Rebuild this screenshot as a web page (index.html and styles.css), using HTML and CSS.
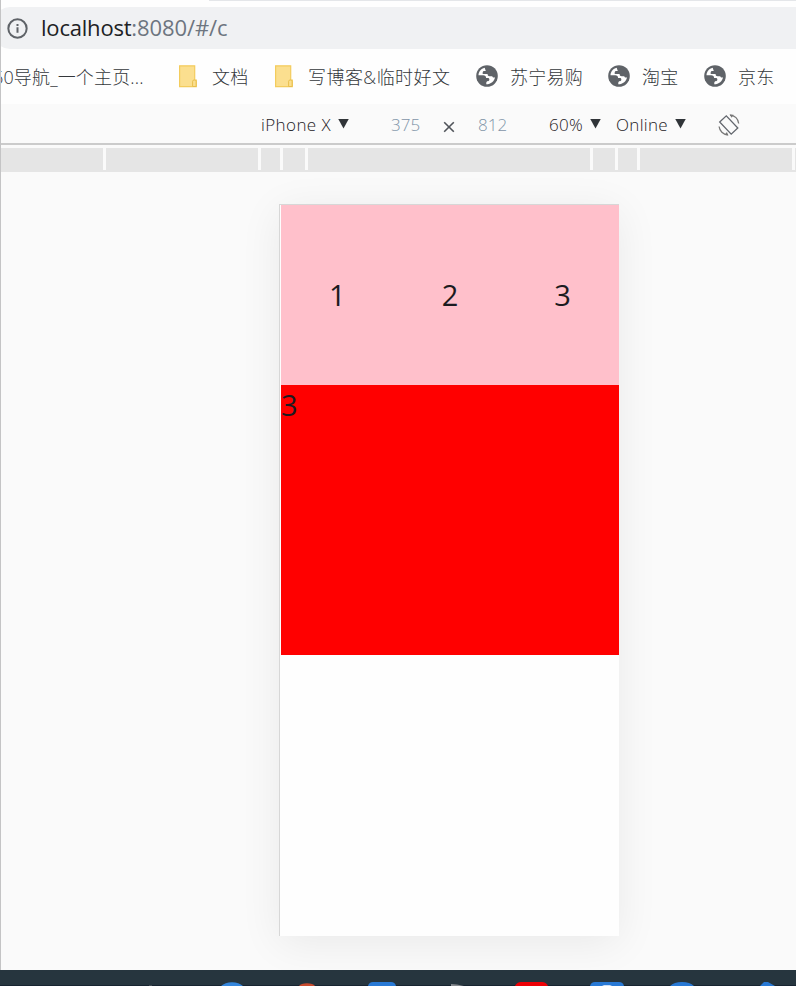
FILE: index.html
```html
<!DOCTYPE html>
<html lang="zh-CN">
<head>
<meta charset="utf-8">
<title>localhost:8080/#/c</title>
<link rel="stylesheet" href="styles.css">
</head>
<body>
<svg class="defs" width="0" height="0" aria-hidden="true">
  <symbol id="globe" viewBox="0 0 22 22">
    <circle cx="11" cy="11" r="10.8" fill="#5f6368"/>
    <path fill="#fff" d="M8.7 2.8C5 3.7 2.7 6.7 2.5 10.2h4.8c1.7 0 2.8 1.1 2.8 2.7h2c1.4 0 1.8 2.3.5 3-.8.4-1.9.2-2.2 1.2l-.2 2.2c4.8 0 8.2-3.3 8.8-7.1-1.2.7-2.4.2-2.8-.9h-2.5c-1.4 0-2.1-.7-2.1-2.2H6.7V7.6c0-1 .6-1.7 1.5-1.7h1.6c-.5-1.3-.8-2.1-1.1-3.1z"/>
  </symbol>
  <symbol id="folder" viewBox="0 0 20 23">
    <path d="M1.6.8h15.1v14.3h1.6v6.6H1.6z" fill="#fbdf8f" stroke="#f3cc5d" stroke-width="1.2"/>
    <path d="M14.6 21.5v-5.3q0-1.2 1.7-1.2t1.8 1.2v5.3z" fill="#fbdf8f" stroke="#e8bf4e"/>
  </symbol>
</svg>
<div class="window">
  <header class="address-row">
    <div class="address">
      <svg class="info" viewBox="0 0 22 22"><circle cx="11" cy="11" r="9.6" fill="none" stroke="#5f6368" stroke-width="2.1"/><path d="M11 9.8v5.7M11 6.2v2.1" stroke="#5f6368" stroke-width="2.1"/></svg>
      <div class="url"><span class="host">localhost</span><span class="path">:8080/#/c</span></div>
    </div>
  </header>
  <nav class="bookmarks">
    <span class="mark first">60导航_一个主页...</span>
    <svg class="folder"><use href="#folder"/></svg><span class="mark">文档</span>
    <svg class="folder"><use href="#folder"/></svg><span class="mark">写博客&amp;临时好文</span>
    <svg class="globe"><use href="#globe"/></svg><span class="mark">苏宁易购</span>
    <svg class="globe"><use href="#globe"/></svg><span class="mark">淘宝</span>
    <svg class="globe"><use href="#globe"/></svg><span class="mark">京东</span>
  </nav>
  <div class="device-bar">
    <span class="device">iPhone X</span><i class="arrow"></i>
    <span class="size">375</span>
    <svg class="times" viewBox="0 0 12 12"><path d="M1.2 1.2l9.6 9.6M10.8 1.2l-9.6 9.6" stroke="#50545a" stroke-width="1.6"/></svg>
    <span class="size">812</span>
    <span class="zoom">60%</span><i class="arrow"></i>
    <span class="online">Online</span><i class="arrow"></i>
    <svg class="rotate" viewBox="0 0 22 22" fill="none"><path d="M1.7 8L8.3 1.8 19.8 14 13.2 20.2z" stroke="#62666d" stroke-width="1.3"/><path d="M12 1.1c4.8.2 8.3 3.7 8.7 8.4M1.1 12.5c.5 4.5 4 8 8.7 8.4" stroke="#777" stroke-width="1.3"/><path d="M11.5.5l4 .2-1.8 3zM10.5 21.5l-4-.4 2.4-3z" fill="#777"/></svg>
  </div>
  <div class="ruler"><i></i><i></i><i></i><i></i><i></i><i></i><i></i><i></i><i></i></div>
  <main class="stage">
    <section class="phone">
      <div class="tabs"><span>1</span><span>2</span><span>3</span></div>
      <div class="content">3</div>
    </section>
  </main>
</div>
<footer class="taskbar">
  <svg viewBox="0 0 796 16">
    <path d="M0 15.5h796" stroke="#172431"/>
    <path d="M149 15.7h3" stroke="#75797b" stroke-width=".6"/>
    <path d="M221 16q4-3.8 11-3.8T243 16z" fill="#3486dc"/>
    <path d="M299 16q2-2.8 8-2.8t8 2.8z" fill="#c94b2e"/>
    <path d="M368 16q1-4 5-4h18q4 0 5 4z" fill="#2879d5"/>
    <path d="M451 14l6 .6 7 1.4h-13z" fill="#85898e"/>
    <path d="M515 16q2-4 6-4h21q4 0 6 4z" fill="#ed0005"/>
    <path d="M590 16q1-4 5-4h24q4 0 5 4z" fill="#2879d5"/>
    <path d="M602 16l2-1h6l2 1z" fill="#c9ddf5"/>
    <path d="M670 16q4-4 12-4t12 4z" fill="#2879d5"/>
    <path d="M760 16l4-4h4l7 4z" fill="#2879d5"/>
  </svg>
</footer>
</body>
</html>
```
FILE: styles.css
```css
* { box-sizing: border-box; }
body {
  margin: 0;
  width: 796px;
  height: 986px;
  overflow: hidden;
  background: #fefefe;
  font-family: "Open Sans", "Noto Sans", "Noto Sans CJK SC", sans-serif;
}
.defs { display: block; height: 0; }
.window { height: 970px; border-left: 1px solid #c4c4c5; overflow: hidden; }

.address-row {
  height: 50px;
  padding-top: 7px;
  background: linear-gradient(#e4e6e9, #e4e6e9) 208px 0 / 588px 1px no-repeat;
}
.address {
  display: flex;
  align-items: center;
  height: 42px;
  margin-left: -7px;
  padding-left: 13px;
  border-radius: 16px 0 0 16px;
  background: #f0f1f3;
}
.info { width: 21px; height: 21px; flex: none; }
.url { margin-left: 13px; font-size: 22px; line-height: 40px; height: 42px; white-space: nowrap; }
.host { color: #202124; letter-spacing: -0.2px; }
.path { color: #6d7580; letter-spacing: -0.1px; }

.bookmarks {
  display: grid;
  grid-template-columns: 177px 34px 62px 34px 168px 34px 98px 34px 62px 34px 60px;
  align-items: center;
  height: 54px;
  color: #34373b;
}
.mark { font-size: 18px; font-weight: 300; line-height: 54px; letter-spacing: 0.25px; white-space: nowrap; }
.mark:nth-of-type(3) { letter-spacing: 0.45px; }
.first { margin-left: -8px; letter-spacing: 0.15px; }
.folder { width: 20px; height: 23px; margin-top: -2px; }
.globe { width: 22px; height: 22px; margin-top: -3px; }

.device-bar {
  display: grid;
  grid-template-columns: 77px 53px 52px 35px 71px 41px 26px 59px 43px 22px;
  align-items: center;
  height: 41px;
  padding-left: 260px;
  background: #fafafa;
  color: #1c2024;
  font-size: 17px;
  font-weight: 300;
  line-height: 41px;
  white-space: nowrap;
}
.device { letter-spacing: 0.4px; }
.online { letter-spacing: 0.3px; }
.zoom { letter-spacing: 0.3px; }
.size { color: #7f94a8; }
.arrow {
  width: 11px;
  height: 10px;
  margin-top: -2px;
  background: #303438;
  clip-path: polygon(0 0, 100% 0, 50% 100%);
}
.times { width: 12px; height: 12px; margin-top: 5px; }
.rotate { width: 22px; height: 22px; }

.ruler {
  display: grid;
  grid-template-columns: 102px 152px 19px 22px 282px 22px 19px 152px 1px;
  column-gap: 3px;
  height: 31px;
  margin-top: -2px;
  padding-top: 3px;
  border-top: 2px solid #cbcbcb;
  background: linear-gradient(#e5e5e5, #e5e5e5) 0 25px / 100% 2px no-repeat #fafafa;
}
.ruler i { height: 22px; background: #e5e5e5; }

.stage { height: 798px; padding: 30px 0 0 278px; background: #fafafa; }
.phone {
  width: 340px;
  height: 732px;
  border-top: 1px solid #d7d7d7;
  border-left: 1px solid #d7d7d7;
  padding-left: 1px;
  background: #fefefe;
  box-shadow: 0 7px 40px rgba(0, 0, 0, .07);
  color: #1b1b20;
  font-size: 29px;
}
.tabs {
  display: grid;
  grid-template-columns: repeat(3, 1fr);
  height: 180px;
  background: #ffc0cb;
  text-align: center;
  line-height: 180px;
}
.content { height: 270px; background: red; line-height: 40px; }

.taskbar { height: 16px; background: #26353e; }
.taskbar svg { display: block; width: 796px; height: 16px; }
```
